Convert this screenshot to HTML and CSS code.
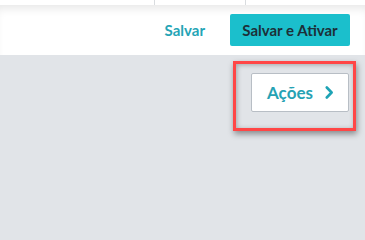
FILE: index.html
```html
<!DOCTYPE html>
<html lang="pt">
<head>
<meta charset="utf-8">
<link rel="stylesheet" href="styles.css">
</head>
<body>
<div class="top-strip">
  <div class="cell c1"></div>
  <div class="cell c2"></div>
  <div class="cell c3"></div>
</div>
<div class="bar">
  <button class="btn-link">Salvar</button>
  <button class="btn-primary">Salvar e Ativar</button>
</div>
<div class="content">
  <button class="btn-actions">Ações
    <svg class="chev" width="9" height="13" viewBox="0 0 9 13"><path d="M1.8 1.5 L6.6 6.5 L1.8 11.5" fill="none" stroke="currentColor" stroke-width="2.6" stroke-linecap="round" stroke-linejoin="round"/></svg>
  </button>
  <div class="highlight"></div>
</div>
</body>
</html>
```
FILE: styles.css
```css
html, body {
  margin: 0;
  padding: 0;
}
body {
  width: 365px;
  height: 235px;
  background: #e1e4e8;
  font-family: Lato, "Open Sans", sans-serif;
  overflow: hidden;
}
.top-strip {
  display: flex;
  height: 5px;
  background: #fff;
}
.cell {
  height: 5px;
}
.c1 {
  width: 154px;
  border-right: 1px solid #d9dcdf;
}
.c2 {
  width: 90px;
  border-right: 1px solid #d9dcdf;
}
.c3 {
  flex: 1;
}
.bar {
  height: 50px;
  background: #fff;
  display: flex;
  align-items: center;
  justify-content: flex-end;
  padding-right: 15px;
  box-shadow: inset 0 8px 8px -4px rgba(0, 0, 0, 0.09);
}
.btn-link {
  background: none;
  border: none;
  font-family: inherit;
  font-size: 15px;
  font-weight: 700;
  color: #25a4b6;
  padding: 0;
  margin-right: 25px;
  cursor: pointer;
}
.btn-primary {
  width: 120px;
  height: 32px;
  background: #1bbfcc;
  border: none;
  border-radius: 2px;
  color: #1d2f38;
  font-family: inherit;
  font-size: 15px;
  font-weight: 700;
  padding: 0;
}
.content {
  position: relative;
  display: flex;
  justify-content: flex-end;
  padding: 18px 16px;
}
.btn-actions {
  width: 98px;
  height: 39px;
  background: #fff;
  border: 1px solid #b8bec5;
  border-radius: 2px;
  display: flex;
  align-items: center;
  justify-content: center;
  gap: 12px;
  padding: 0 0 0 1px;
  font-family: inherit;
  font-size: 17px;
  font-weight: 700;
  color: #26a2b4;
}
.chev {
  color: #1ea3b5;
  display: block;
}
.highlight {
  position: absolute;
  left: 233px;
  top: 6px;
  width: 117px;
  height: 64px;
  border: 3px solid #ff4646;
  box-shadow: 1px 3px 6px rgba(0, 0, 0, 0.4), inset 1px 1px 5px rgba(0, 0, 0, 0.28);
  pointer-events: none;
}
```
